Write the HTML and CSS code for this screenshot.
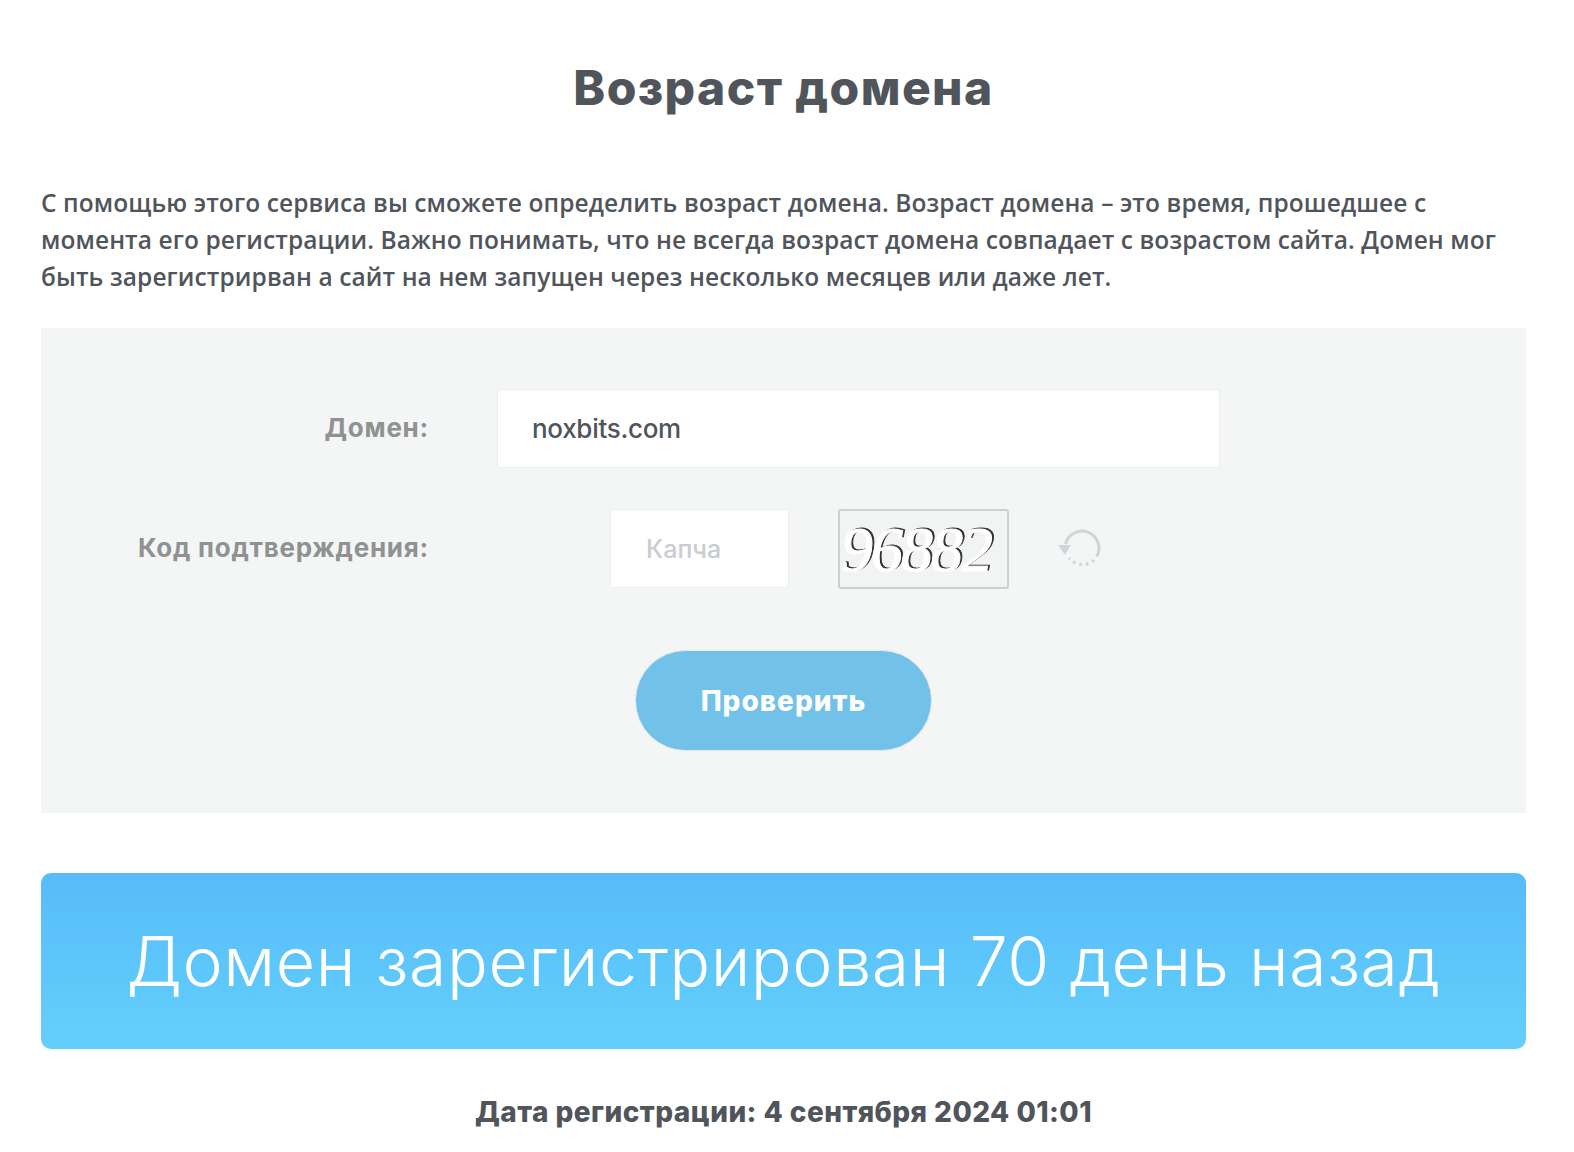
FILE: index.html
```html
<!DOCTYPE html>
<html lang="en">

<head>
    <meta charset="UTF-8">
    <title>Возраст домена</title>
    <link rel="stylesheet" href="styles.css">
</head>

<body>
    <div class="container">
        <h1>Возраст домена</h1>
        <p class="intro">С помощью этого сервиса вы сможете определить возраст домена. Возраст домена – это время, прошедшее с
            момента его регистрации. Важно понимать, что не всегда возраст домена совпадает с возрастом сайта. Домен мог
            быть зарегистрирван а сайт на нем запущен через несколько месяцев или даже лет.</p>
        <form class="check-form" onsubmit="return false">
            <div class="form-row">
                <label class="form-label" for="domain">Домен:</label>
                <input class="text-input domain-input" id="domain" type="text" value="noxbits.com">
            </div>
            <div class="form-row">
                <label class="form-label" for="captcha">Код подтверждения:</label>
                <div class="captcha-group">
                    <input class="text-input captcha-input" id="captcha" type="text" placeholder="Капча">
                    <div class="captcha-image"><span class="captcha-digits" data-text="96882">96882</span></div>
                    <svg class="refresh-icon" width="48" height="48" viewBox="0 0 48 48" fill="none">
                        <path d="M7.5 19 A17 17 0 1 1 38.8 31.5" stroke="#d0d3d9" stroke-width="3"/>
                        <path d="M36 35 A17 17 0 0 1 11 33" stroke="#d0d3d9" stroke-width="3" stroke-dasharray="2.6 4"/>
                        <path d="M0 20 L12.6 20 L7 30 Z" fill="#d0d3d9"/>
                    </svg>
                </div>
            </div>
            <div class="form-actions">
                <button class="check-btn">Проверить</button>
            </div>
        </form>
        <div class="result-banner">Домен зарегистрирован 70 день назад</div>
        <p class="reg-date">Дата регистрации: 4 сентября 2024 01:01</p>
    </div>
</body>

</html>
```

FILE: styles.css
```css
html,
body {
    margin: 0;
    padding: 0;
    background: #fff;
}

body {
    font-family: 'Open Sans', Arial, sans-serif;
    color: #50555c;
    overflow: hidden;
}

.container {
    margin: 0 48px 0 41px;
}

h1 {
    margin: 0;
    padding-top: 58px;
    font-family: Inter, Arial, sans-serif;
    font-size: 48px;
    line-height: 60px;
    font-weight: 800;
    letter-spacing: 1.4px;
    text-align: center;
}

.intro {
    margin: 66px 0 0;
    font-size: 24.5px;
    line-height: 37px;
    font-weight: 600;
    letter-spacing: 0.1px;
}

.check-form {
    margin-top: 33px;
    padding: 61px 0 62px;
    background: #f4f6f6;
}

.form-row {
    display: grid;
    grid-template-columns: 388px 1fr;
    column-gap: 68px;
    align-items: start;
    margin-bottom: 41px;
}

.form-label {
    font-family: Inter, Arial, sans-serif;
    font-size: 26px;
    line-height: 78px;
    font-weight: 700;
    letter-spacing: 0.75px;
    color: #8f9291;
    text-align: right;
}

.text-input {
    box-sizing: border-box;
    height: 79px;
    border: 1px solid #eceeee;
    border-radius: 3px;
    background: #fff;
    font-family: Inter, Arial, sans-serif;
    font-size: 25px;
    font-weight: 500;
    color: #50555c;
    outline: none;
}

.text-input::placeholder {
    color: #c9ccd3;
}

.domain-input {
    width: 723px;
    padding: 0 34px;
    font-size: 26px;
    letter-spacing: -0.3px;
}

.captcha-group {
    display: flex;
    align-items: flex-start;
    padding-left: 113px;
}

.captcha-input {
    width: 179px;
    padding: 0 35px;
}

.captcha-image {
    box-sizing: border-box;
    width: 171px;
    height: 80px;
    margin-left: 49px;
    padding-left: 3px;
    border: 2px solid #cfd1d1;
    border-radius: 3px;
    background: #f2f3f3;
    overflow: hidden;
}

.captcha-digits {
    position: relative;
    display: inline-block;
    font-family: 'Liberation Serif', serif;
    font-style: italic;
    font-size: 64px;
    line-height: 76px;
    letter-spacing: -2px;
    color: #2f3133;
    -webkit-text-stroke: 0.8px #2f3133;
}

.captcha-digits::after {
    content: attr(data-text);
    position: absolute;
    left: -2px;
    top: 1px;
    color: #fff;
    -webkit-text-stroke: 1px #fff;
}

.refresh-icon {
    margin-left: 49px;
    margin-top: 16px;
}

.form-actions {
    display: flex;
    justify-content: center;
    margin-top: 61px;
}

.check-btn {
    width: 297px;
    height: 101px;
    border: 1px solid #e4eaee;
    border-radius: 51px;
    background: #71c1e8;
    color: #fff;
    font-family: Inter, Arial, sans-serif;
    font-size: 28px;
    font-weight: 800;
    letter-spacing: 1px;
    cursor: pointer;
}

.result-banner {
    margin-top: 60px;
    height: 176px;
    line-height: 176px;
    border-radius: 10px;
    background: linear-gradient(180deg, #56bcf9 0%, #64cffb 100%);
    color: #fff;
    font-family: Inter, Arial, sans-serif;
    font-size: 68px;
    font-weight: 300;
    letter-spacing: 0.55px;
    text-align: center;
}

.reg-date {
    margin: 45px 0 0;
    font-family: Inter, Arial, sans-serif;
    font-size: 28px;
    line-height: 36px;
    font-weight: 800;
    letter-spacing: 0.45px;
    text-align: center;
}
```
